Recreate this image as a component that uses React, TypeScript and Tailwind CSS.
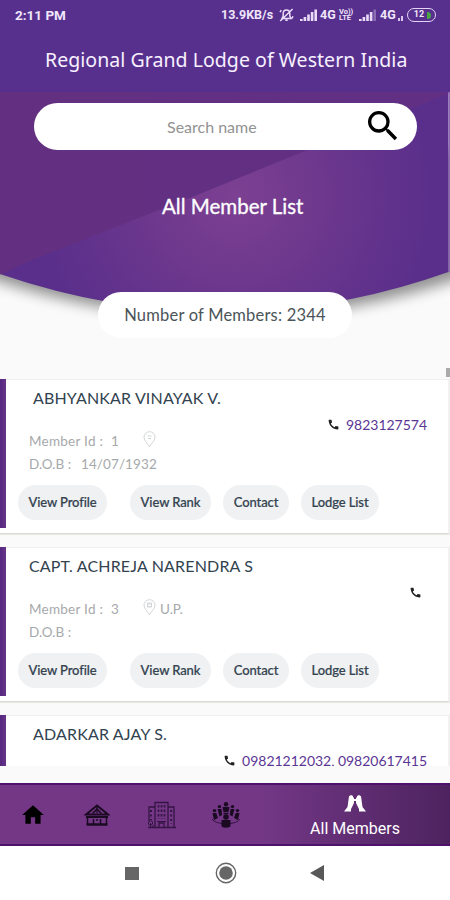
import React from "react";
import { MdHome, MdSearch, MdCall } from "react-icons/md";

type Member = {
  name: string;
  id: string;
  dob: string;
  place: string;
  phone: string;
  indent: string;
};

const members: Member[] = [
  { name: "ABHYANKAR VINAYAK V.", id: "1", dob: "14/07/1932", place: "", phone: "9823127574", indent: "pl-[27px] tracking-[0.16px]" },
  { name: "CAPT. ACHREJA NARENDRA S", id: "3", dob: "", place: "U.P.", phone: "", indent: "pl-[23px] tracking-[0.16px]" },
  { name: "ADARKAR AJAY S.", id: "4", dob: "", place: "", phone: "09821212032, 09820617415", indent: "pl-[27px] tracking-[0.16px]" },
];

function Signal({ faded = false }: { faded?: boolean }) {
  return (
    <svg width="18" height="12" viewBox="0 0 18 12" fill="#eadcf8">
      <rect x="0" y="10" width="2.6" height="2" />
      <rect x="3.6" y="8" width="2.6" height="4" />
      <rect x="7.2" y="5.5" width="2.6" height="6.5" />
      <rect x="10.8" y="3" width="2.6" height="9" />
      <rect x="14.4" y="0.5" width="2.6" height="11.5" opacity={faded ? 0.35 : 1} />
    </svg>
  );
}

function StatusBar() {
  return (
    <div className="flex h-[30px] items-center pl-[15px] font-['Roboto',sans-serif] text-[#f0e6fb]">
      <span className="w-[206px] text-[13.5px] font-bold leading-[16px]">2:11 PM</span>
      <span className="w-[56px] whitespace-nowrap text-[12.5px] font-bold leading-[16px]">13.9KB/s</span>
      <svg className="ml-[2px]" width="15" height="14" viewBox="0 0 15 14" fill="none" stroke="#eadcf8" strokeWidth="1.5">
        <path d="M3 10.5h9L10.8 8V5.5C10.8 3 9.3 2 7.5 2S4.2 3 4.2 5.5V8zM6.3 12.2h2.4M1.2 13 13.6 1M1 4.2l1.3-2M14 8.2l-1 2.2" />
      </svg>
      <span className="ml-[6px]"><Signal /></span>
      <span className="ml-[2px] w-[17px] text-[12.5px] font-bold leading-[16px]">4G</span>
      <span className="ml-[2px] flex w-[16px] flex-col text-[7.5px] font-bold leading-[6.5px]">
        <span>Vo))</span>
        <span>LTE</span>
      </span>
      <span className="ml-[4px]"><Signal faded /></span>
      <span className="ml-[3px] w-[17px] text-[12.5px] font-bold leading-[16px]">4G</span>
      <svg width="6" height="6" className="ml-[1px] mt-[5px]" viewBox="0 0 6 6" fill="#d8c5ec">
        <rect y="3" width="2" height="3" /><rect x="3" y="1" width="2" height="5" />
      </svg>
      <span className="ml-[3px] flex h-[14px] w-[29px] items-center justify-center rounded-full border-[1.5px] border-[#e4d5f4] text-[9px] font-bold">
        <span className="ml-[2px]">12</span>
        <span className="ml-[3px] h-[7px] w-[4px] rounded-r-full bg-[#49a642]" />
      </span>
    </div>
  );
}

function HeroArt() {
  return (
    <svg className="absolute left-0 top-0" width="450" height="250" viewBox="0 92 450 250">
      <defs>
        <radialGradient id="glow" gradientUnits="userSpaceOnUse" cx="236" cy="196" r="195">
          <stop offset="0" stopColor="#7d4092" />
          <stop offset="0.5" stopColor="#6b378d" />
          <stop offset="1" stopColor="#5a2f8b" />
        </radialGradient>
        <linearGradient id="flap" gradientUnits="userSpaceOnUse" x1="0" y1="0" x2="450" y2="0">
          <stop offset="0" stopColor="#633081" />
          <stop offset="1" stopColor="#612f84" />
        </linearGradient>
        <filter id="shade" x="-10%" y="-10%" width="120%" height="130%">
          <feGaussianBlur stdDeviation="7" />
        </filter>
        <clipPath id="bowl"><path d="M0 92H448.500V272Q225 351 0 274Z" /></clipPath>
      </defs>
      <path d="M-20 150H470V275Q225 361 -20 275Z" fill="#000" opacity="0.42" filter="url(#shade)" />
      <g clipPath="url(#bowl)">
        <rect y="92" width="450" height="250" fill="url(#glow)" />
        <path d="M0 92H453L300 153L197 195L20 265L0 275Z" fill="url(#flap)" />
      </g>
      <rect x="448.500" y="92" width="1.500" height="180" fill="#8d6bb2" />
    </svg>
  );
}

function Pin({ dotted }: { dotted: boolean }) {
  return (
    <svg width="13" height="17" viewBox="0 0 13 17" fill="none" stroke="#d3d6d7" strokeWidth="1">
      <path d="M6.500 16C5.500 13 1 10.200 1 6.200a5.500 5.500 0 0 1 11 0C12 10.200 7.500 13 6.500 16Z" />
      <path d="M4.500 5h4M5 7.500h3" />
      {dotted && <path d="M4.500 4v4h4V4z" />}
    </svg>
  );
}

const pill = "flex h-[35px] items-center justify-center rounded-full bg-[#eff1f3] text-[13px] font-medium tracking-[-0.1px] [-webkit-text-stroke:0.2px_#34434f] text-[#34434f]";

function MemberCard({ m }: { m: Member }) {
  return (
    <article className="mb-[13px] flex h-[155px] shrink-0 border-b border-b-[#dadbd8] border-r-2 border-r-[#f1f1f0] border-t border-t-[#f0f0ee] bg-white shadow-[0_1px_1px_#e9e9e7]">
      <div className="-mt-px h-[149px] w-[6px] shrink-0 bg-gradient-to-r from-[#55277f] to-[#673487]" />
      <div className="flex min-w-0 flex-1 flex-col">
        <h2 className={"h-[35px] whitespace-nowrap pt-[8px] text-[16px] leading-[20px] text-[#32434f] " + m.indent}>{m.name}</h2>
        <div className="flex h-[18px] items-center justify-end pr-[21px] text-[14px] text-[#5a3694]">
          <MdCall className={m.phone ? "mr-[6px] text-[#222]" : "mr-[5px] text-[#222]"} size={13} />
          <span className="tracking-[-0.02px]">{m.phone}</span>
        </div>
        <div className="flex h-[17px] items-center pl-[23px] text-[13.500px] leading-[17px] text-[#a6a9ab]">
          <span className="w-[82px] whitespace-nowrap tracking-[0.25px]">Member Id :</span>
          <span className="w-[32px]">{m.id}</span>
          <span className="-mt-[4px] mr-[4px]"><Pin dotted={!!m.place} /></span>
          <span>{m.place}</span>
        </div>
        <div className="mt-[6px] flex h-[17px] items-center pl-[23px] text-[13.500px] leading-[17px] text-[#a6a9ab]">
          <span className="w-[52px] whitespace-nowrap">D.O.B :</span>
          <span className="tracking-[0.1px]">{m.dob}</span>
        </div>
        <div className="mt-[12px] flex pl-[12px]">
          <button className={pill + " mr-[23px] w-[89px]"}>View Profile</button>
          <button className={pill + " mr-[12px] w-[81px]"}>View Rank</button>
          <button className={pill + " mr-[12px] w-[66px]"}>Contact</button>
          <button className={pill + " w-[78px]"}>Lodge List</button>
        </div>
      </div>
    </article>
  );
}

function LodgeIcon() {
  return (
    <svg width="26" height="22" viewBox="0 0 26 22" fill="none" stroke="#1b0b22">
      <path d="M2 10.500 13 1.500 24 10.500Z" strokeWidth="2" />
      <path d="M13 2v3M8.500 9.500 13 5l4.500 4.500" strokeWidth="1.500" />
      <circle cx="13" cy="7.500" r="1" strokeWidth="1" />
      <path d="M2 13h22" strokeWidth="2" />
      <path d="M3.500 14v6M22.500 14v6M9.500 15v5M16.500 15v5M12 16h2" strokeWidth="1.500" />
      <path d="M2.500 20.500h21" strokeWidth="2.500" />
    </svg>
  );
}

function BuildingIcon() {
  return (
    <svg width="30" height="30" viewBox="0 0 30 30" fill="none" stroke="#351443">
      <path d="M8 27V2.500h13V27M8 7H2v14M21 7h6v20M1 27.500h28M12 27v-4h5v4" strokeWidth="1.300" />
      <path d="M11.500 5v14M14.500 5v14M17.500 5v14" strokeWidth="1.700" strokeDasharray="2.500 2" />
      <path d="M4 10v10M24.200 10v14" strokeWidth="2" strokeDasharray="2 2.500" />
      <circle cx="3.500" cy="23" r="2.200" strokeWidth="1" />
      <path d="M3.500 23v4M5 27l2-2M10 21.500h9" strokeWidth="1" />
    </svg>
  );
}

function MeetingIcon() {
  return (
    <svg width="30" height="28" viewBox="0 0 30 28" fill="#1b0b22">
      <circle cx="15" cy="3.300" r="2.200" />
      <path d="M11.500 6h7l-1 5h-5z" />
      <circle cx="8.500" cy="5.600" r="1.700" /><circle cx="21.500" cy="5.600" r="1.700" />
      <path d="M6.500 8h4l.7 6-2.700 1.500zM23.500 8h-4l-.7 6 2.700 1.500z" />
      <circle cx="3.500" cy="9.600" r="1.700" /><circle cx="26.500" cy="9.600" r="1.700" />
      <path d="M1.500 12h3.800l1.700 5-4 2zM28.500 12h-3.800L23 17l4 2z" />
      <path d="M1 18c2 3 6 4 10 4.500M29 18c-2 3-6 4-10 4.500" fill="none" stroke="#351443" />
      <circle cx="15" cy="16" r="2.800" />
      <path d="M10.500 19h9v6.500q-4.500 2.500-9 0z" />
      <path d="M12.500 12.500h5" stroke="#1b0b22" strokeWidth="1.500" />
    </svg>
  );
}

function MembersIcon() {
  return (
    <svg width="24" height="20" viewBox="0 0 24 20" fill="#fff">
      <path d="M6 2.200 8 1l2 1v1.500h1V9L8 15v2.500H1L4.500 13z" />
      <path d="M18 2.200 16 1l-2 1v1.500h-1V9l3 6v2.500h7L19.500 13z" />
      <path d="M10.500 5h3v2h-3z" />
    </svg>
  );
}

export default function App() {
  return (
    <div className="flex h-[900px] w-[450px] flex-col overflow-hidden bg-[#fafafa] font-['Lato',sans-serif]">
      <header className="h-[92px] shrink-0 bg-[#57308e]">
        <StatusBar />
        <h1 className="ml-[45px] mt-[16px] whitespace-nowrap font-['Noto_Sans',sans-serif] text-[19.500px] leading-[28px] tracking-[0.05px] text-[#f8f1ff]">
          Regional Grand Lodge of Western India
        </h1>
      </header>

      <section className="relative h-[287px] shrink-0">
        <HeroArt />
        <div className="relative flex h-full flex-col">
          <label className="ml-[34px] mt-[11px] flex h-[47px] w-[383px] items-center rounded-full bg-white">
            <span className="ml-[133px] w-[196px] text-[16px] text-[#929292]">Search name</span>
            <MdSearch size={40} className="-mt-px text-black" />
          </label>
          <h2 className="ml-[162px] mt-[43px] whitespace-nowrap text-[20.500px] leading-[26px] text-white [-webkit-text-stroke:0.3px_#fff]">All Member List</h2>
          <div className="ml-[98px] mt-[73px] flex h-[46px] w-[254px] items-center justify-center rounded-full bg-white text-[16.500px] tracking-[0.2px] text-[#4b5459]">
            Number of Members: 2344
          </div>
          <div className="ml-auto mt-[30px] h-[9px] w-[4px] bg-[#aaa]" />
        </div>
      </section>

      <main className="flex h-[387px] shrink-0 flex-col overflow-hidden">
        {members.map((m) => <MemberCard key={m.id} m={m} />)}
      </main>

      <nav className="mt-[17px] flex h-[63px] shrink-0 items-center border-y-2 border-[#4e126b] bg-[linear-gradient(90deg,#733786_0%,#733786_58%,#4d235f_100%)]">
        <MdHome size={26} className="ml-[20px]" />
        <span className="ml-[38px]"><LodgeIcon /></span>
        <span className="ml-[37px]"><BuildingIcon /></span>
        <span className="ml-[34px]"><MeetingIcon /></span>
        <span className="ml-[68px] mt-[3px] flex w-[92px] flex-col items-center font-['Roboto',sans-serif] text-[16px] leading-[20px] text-white">
          <MembersIcon />
          <span className="mt-[5px] whitespace-nowrap">All Members</span>
        </span>
      </nav>

      <footer className="flex flex-1 items-center bg-white">
        <span className="ml-[125px] h-[13px] w-[14px] bg-[#666]" />
        <svg className="ml-[75px]" width="24" height="24" viewBox="0 0 24 24">
          <circle cx="12" cy="12" r="9.700" fill="none" stroke="#666" strokeWidth="1.400" />
          <circle cx="12" cy="12" r="6.800" fill="#666" />
        </svg>
        <svg className="ml-[72px]" width="14" height="16" viewBox="0 0 14 16"><path d="M0 8 14 0v16z" fill="#585858" /></svg>
      </footer>
    </div>
  );
}
